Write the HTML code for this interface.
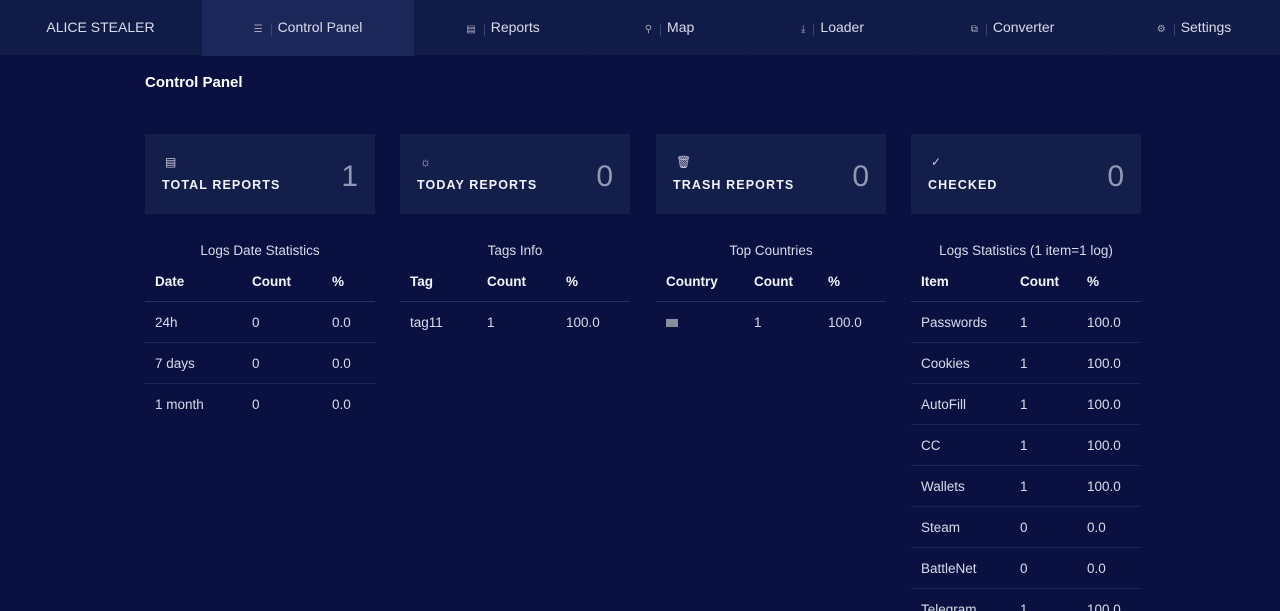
<!DOCTYPE html>
<html style="overflow:hidden;height:611px"><head><meta charset="utf-8"><style>
*{margin:0;padding:0;box-sizing:border-box}
body{width:1280px;height:611px;overflow:hidden;background:#0a1140;font-family:"Liberation Sans",sans-serif;color:#e6e9f2;position:relative}
.nav{position:absolute;top:0;left:0;width:1280px;height:56px;background:#111b48;border-bottom:1px solid #0c143a}
.tab{position:absolute;top:0;height:56px;line-height:54px;text-align:center;font-size:14px;color:#d8dcea;border-right:1px solid #0e1740}
.tab.act{background:#1c2759}
.ic{display:inline-block;font-size:10px;color:#aab;margin-right:6px;padding-right:8px;border-right:1px solid #3a4470;line-height:12px}
h1{position:absolute;left:145px;top:74px;font-size:15px;font-weight:bold;color:#fff}
.card{position:absolute;top:134px;width:230px;height:80px;background:#141e4b}
.card .i{position:absolute;left:20px;top:21px;font-size:12px;color:#ccd}
.card .l{position:absolute;left:17px;top:44px;font-size:12.5px;font-weight:bold;letter-spacing:1.1px;color:#f0f2f8}
.card .n{position:absolute;right:17px;top:26px;font-size:30px;color:#9098b4}
.tt{position:absolute;top:243px;width:230px;text-align:center;font-size:13.5px;color:#d6daea}
table{position:absolute;top:266px;width:230px;border-collapse:collapse;table-layout:fixed;font-size:13.5px}
th{text-align:left;font-weight:bold;height:35px;padding-left:10px;padding-bottom:4px;border-bottom:1px solid #26305c;color:#f2f4fa}
td{height:41px;padding-left:10px;padding-top:1px;border-bottom:1px solid #1c2654;color:#d8dcea}
</style></head><body>
<div class="nav">
<div class="tab" style="left:0;width:202px">ALICE STEALER</div>
<div class="tab act" style="left:202px;width:213px"><span class="ic">☰</span>Control Panel</div>
<div class="tab" style="left:415px;width:177px"><span class="ic">▤</span>Reports</div>
<div class="tab" style="left:592px;width:156px"><span class="ic">⚲</span>Map</div>
<div class="tab" style="left:748px;width:170px"><span class="ic">⤓</span>Loader</div>
<div class="tab" style="left:918px;width:190px"><span class="ic">⧉</span>Converter</div>
<div class="tab" style="left:1108px;width:172px;border-right:0"><span class="ic">⚙</span>Settings</div>
</div>
<h1>Control Panel</h1>

<div class="card" style="left:145px"><div class="i">▤</div><div class="l">TOTAL REPORTS</div><div class="n">1</div></div>
<div class="card" style="left:400px"><div class="i">☼</div><div class="l">TODAY REPORTS</div><div class="n">0</div></div>
<div class="card" style="left:656px"><div class="i">🗑</div><div class="l">TRASH REPORTS</div><div class="n">0</div></div>
<div class="card" style="left:911px"><div class="i">✓</div><div class="l">CHECKED</div><div class="n">0</div></div>

<div class="tt" style="left:145px">Logs Date Statistics</div>
<table style="left:145px"><colgroup><col style="width:97px"><col style="width:80px"><col></colgroup>
<tr><th>Date</th><th>Count</th><th>%</th></tr>
<tr><td>24h</td><td>0</td><td>0.0</td></tr>
<tr><td>7 days</td><td>0</td><td>0.0</td></tr>
<tr><td style="border:0">1 month</td><td style="border:0">0</td><td style="border:0">0.0</td></tr>
</table>

<div class="tt" style="left:400px">Tags Info</div>
<table style="left:400px"><colgroup><col style="width:77px"><col style="width:79px"><col></colgroup>
<tr><th>Tag</th><th>Count</th><th>%</th></tr>
<tr><td style="border:0">tag11</td><td style="border:0">1</td><td style="border:0">100.0</td></tr>
</table>

<div class="tt" style="left:656px">Top Countries</div>
<table style="left:656px"><colgroup><col style="width:88px"><col style="width:74px"><col></colgroup>
<tr><th>Country</th><th>Count</th><th>%</th></tr>
<tr><td style="border:0"><span style="display:inline-block;width:12px;height:8px;background:#8a8f9e"></span></td><td style="border:0">1</td><td style="border:0">100.0</td></tr>
</table>

<div class="tt" style="left:911px">Logs Statistics (1 item=1 log)</div>
<table style="left:911px"><colgroup><col style="width:99px"><col style="width:67px"><col></colgroup>
<tr><th>Item</th><th>Count</th><th>%</th></tr>
<tr><td>Passwords</td><td>1</td><td>100.0</td></tr>
<tr><td>Cookies</td><td>1</td><td>100.0</td></tr>
<tr><td>AutoFill</td><td>1</td><td>100.0</td></tr>
<tr><td>CC</td><td>1</td><td>100.0</td></tr>
<tr><td>Wallets</td><td>1</td><td>100.0</td></tr>
<tr><td>Steam</td><td>0</td><td>0.0</td></tr>
<tr><td>BattleNet</td><td>0</td><td>0.0</td></tr>
<tr><td>Telegram</td><td>1</td><td>100.0</td></tr>
</table>
</body></html>
